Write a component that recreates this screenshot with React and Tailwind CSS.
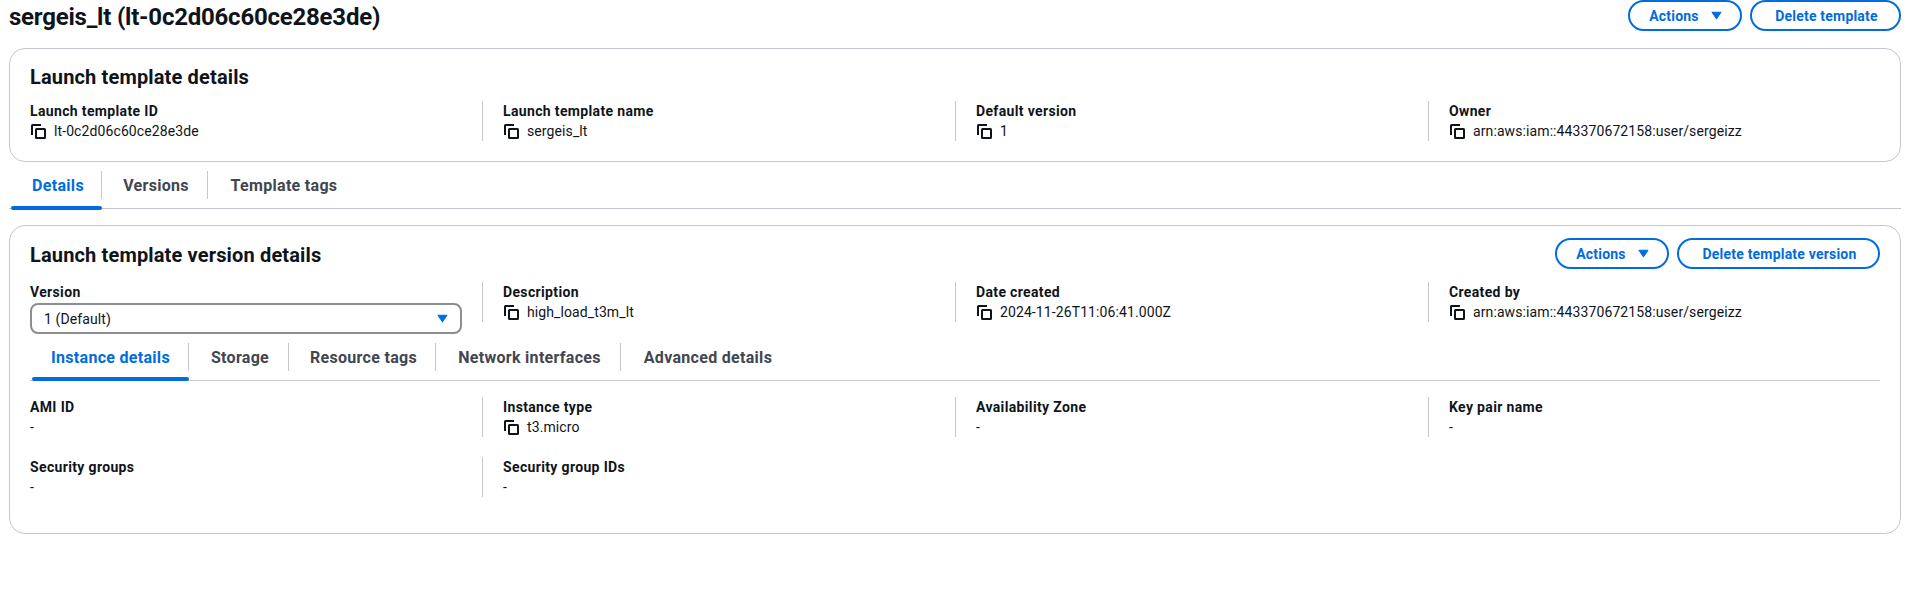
import React from "react";

const CopyIcon = () => (
  <svg viewBox="0 0 16 16" className="h-4 w-4 shrink-0 mr-2" fill="none" stroke="#0f141a" strokeWidth="2">
    <rect x="6" y="6" width="9" height="9" rx="0.5" />
    <path d="M2 12V2.5a.5.5 0 0 1 .5-.5H11" />
  </svg>
);

const Caret = () => (
  <svg viewBox="0 0 10 8" className="h-[9px] w-[11px] shrink-0" fill="#006ce0" stroke="#006ce0" strokeWidth="1" strokeLinejoin="round">
    <path d="M1 1h8L5 7z" />
  </svg>
);

const Field = ({ label, value, copy, first }) => (
  <div className={first ? "h-10" : "h-10 -ml-[21px] pl-5 border-l border-[#c6c6cd]"}>
    <div className="text-sm leading-5 font-bold tracking-[0.35px] text-[#0f141a]">{label}</div>
    <div className="flex items-center text-sm leading-5 tracking-[0.1px] text-[#0f141a]">
      {copy && <CopyIcon />}
      <span>{value}</span>
    </div>
  </div>
);

const Button = ({ children, className }) => (
  <button className={`h-[31px] rounded-full border-2 border-[#006ce0] flex items-center justify-center text-sm font-bold tracking-[0.2px] text-[#006ce0] bg-white ${className}`}>
    {children}
  </button>
);

const Tabs = ({ items, widths, height, className }) => (
  <div className={`flex border-b border-[#c6c6cd] ${className}`}>
    {items.map((item, i) => (
      <div key={item} className={`relative flex items-start ${widths[i]} ${height}`}>
        <div className={`h-7 w-full flex items-center justify-center text-base font-bold tracking-[0.3px] pt-0.5 pl-[3px] ${i === 0 ? "text-[#006ce0]" : "text-[#424650]"} ${i < items.length - 1 ? "border-r border-[#c6c6cd]" : ""}`}>
          {item}
        </div>
        {i === 0 && <div className="absolute left-0.5 right-0 -bottom-px h-1 rounded-sm bg-[#006ce0]" />}
      </div>
    ))}
  </div>
);

const gridCls = "grid grid-cols-4 gap-x-[42px]";

export default function App() {
  return (
    <div className="h-[592px] bg-white pl-[9px] pr-4 font-['Roboto',sans-serif] overflow-hidden">
      {/* Page header */}
      <div className="flex h-12 items-start justify-between">
        <h1 className="text-2xl leading-[35px] font-bold tracking-[-0.22px] text-[#0f141a]">sergeis_lt (lt-0c2d06c60ce28e3de)</h1>
        <div className="flex gap-2">
          <Button className="w-[114px] gap-3 pl-px">Actions <Caret /></Button>
          <Button className="w-[151px] pl-0.5">Delete template</Button>
        </div>
      </div>

      {/* Template details */}
      <div className="h-[114px] rounded-2xl border border-[#c6c6cd] px-[20px] pt-[16px]">
        <h2 className="text-xl leading-6 font-bold tracking-[0.15px] text-[#0f141a] mb-3">Launch template details</h2>
        <div className={gridCls}>
          <Field first label="Launch template ID" value="lt-0c2d06c60ce28e3de" copy />
          <Field label="Launch template name" value="sergeis_lt" copy />
          <Field label="Default version" value="1" copy />
          <Field label="Owner" value="arn:aws:iam::443370672158:user/sergeizz" copy />
        </div>
      </div>

      <Tabs
        items={["Details", "Versions", "Template tags"]}
        widths={["w-[93px] pl-[3px]", "w-[106px]", "w-[149px]"]}
        height="h-[38px]"
        className="pt-[9px] h-[47px]"
      />

      {/* Version details */}
      <div className="mt-4 h-[309px] rounded-2xl border border-[#c6c6cd] px-[20px] pt-3">
        <div className="flex items-start justify-between h-[44px]">
          <h2 className="text-xl leading-6 font-bold tracking-[0.15px] text-[#0f141a] mt-[5px]">Launch template version details</h2>
          <div className="flex gap-2">
            <Button className="w-[114px] gap-3 pl-px">Actions <Caret /></Button>
            <Button className="w-[203px] pl-0.5">Delete template version</Button>
          </div>
        </div>
        <div className={`${gridCls} h-[52px]`}>
          <div>
            <div className="text-sm leading-5 font-bold tracking-[0.35px] text-[#0f141a]">Version</div>
            <div className="mt-px -mr-px flex h-[31px] items-center justify-between rounded-lg border-2 border-[#8c8c94] pl-3 pr-3 text-sm tracking-[0.1px] text-[#0f141a]">
              <span>1 (Default)</span>
              <Caret />
            </div>
          </div>
          <Field label="Description" value="high_load_t3m_lt" copy />
          <Field label="Date created" value="2024-11-26T11:06:41.000Z" copy />
          <Field label="Created by" value="arn:aws:iam::443370672158:user/sergeizz" copy />
        </div>

        <Tabs
          items={["Instance details", "Storage", "Resource tags", "Network interfaces", "Advanced details"]}
          widths={["w-[159px]", "w-[100px]", "w-[147px]", "w-[185px]", "w-[171px]"]}
          height="h-[37px]"
          className="mt-[9px] h-[38px]"
        />

        <div className={`${gridCls} gap-y-5 mt-4`}>
          <Field first label="AMI ID" value="-" />
          <Field label="Instance type" value="t3.micro" copy />
          <Field label="Availability Zone" value="-" />
          <Field label="Key pair name" value="-" />
          <Field first label="Security groups" value="-" />
          <Field label="Security group IDs" value="-" />
        </div>
      </div>
    </div>
  );
}
